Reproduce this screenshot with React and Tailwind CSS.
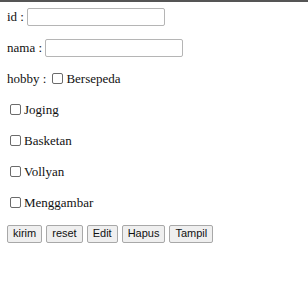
const Box = () => (
  <span className="inline-block w-[11px] h-[11px] border border-[#6b6b6b] rounded-[2px] bg-white mr-[3px]" />
);

const hobbies = ['Joging', 'Basketan', 'Vollyan', 'Menggambar'];
const buttons = ['kirim', 'reset', 'Edit', 'Hapus', 'Tampil'];

export default function App() {
  return (
    <div
      className="w-[308px] h-[285px] bg-white border-t-2 border-[#555] text-[13px] text-[#111]"
      style={{ fontFamily: '"Liberation Serif", serif' }}
    >
      {/* id */}
      <div className="h-[30px] flex items-center pl-[7px]">
        <span>id :</span>
        <input className="ml-[3px] w-[138px] h-[18px] border border-[#b5b5b5] rounded-[2px] outline-none" />
      </div>

      {/* nama */}
      <div className="h-[31px] flex items-center pl-[7px]">
        <span>nama :</span>
        <input className="ml-[3px] w-[138px] h-[18px] border border-[#b5b5b5] rounded-[2px] outline-none" />
      </div>

      {/* hobby */}
      <div className="h-[31px] flex items-center pl-[7px]">
        <span>hobby :</span>
        <span className="ml-[6px] flex items-center">
          <Box />
          Bersepeda
        </span>
      </div>

      {hobbies.map((h) => (
        <div key={h} className="h-[31px] flex items-center pl-[10px]">
          <Box />
          {h}
        </div>
      ))}

      {/* buttons */}
      <div className="h-[31px] flex items-center pl-[7px] gap-[4px]">
        {buttons.map((b) => (
          <button
            key={b}
            className="h-[18px] px-[5px] bg-[#efefef] border border-[#a8a8a8] rounded-[2px] text-[11px] leading-none text-[#111]"
            style={{ fontFamily: '"Liberation Sans", Arial, sans-serif' }}
          >
            {b}
          </button>
        ))}
      </div>
    </div>
  );
}
